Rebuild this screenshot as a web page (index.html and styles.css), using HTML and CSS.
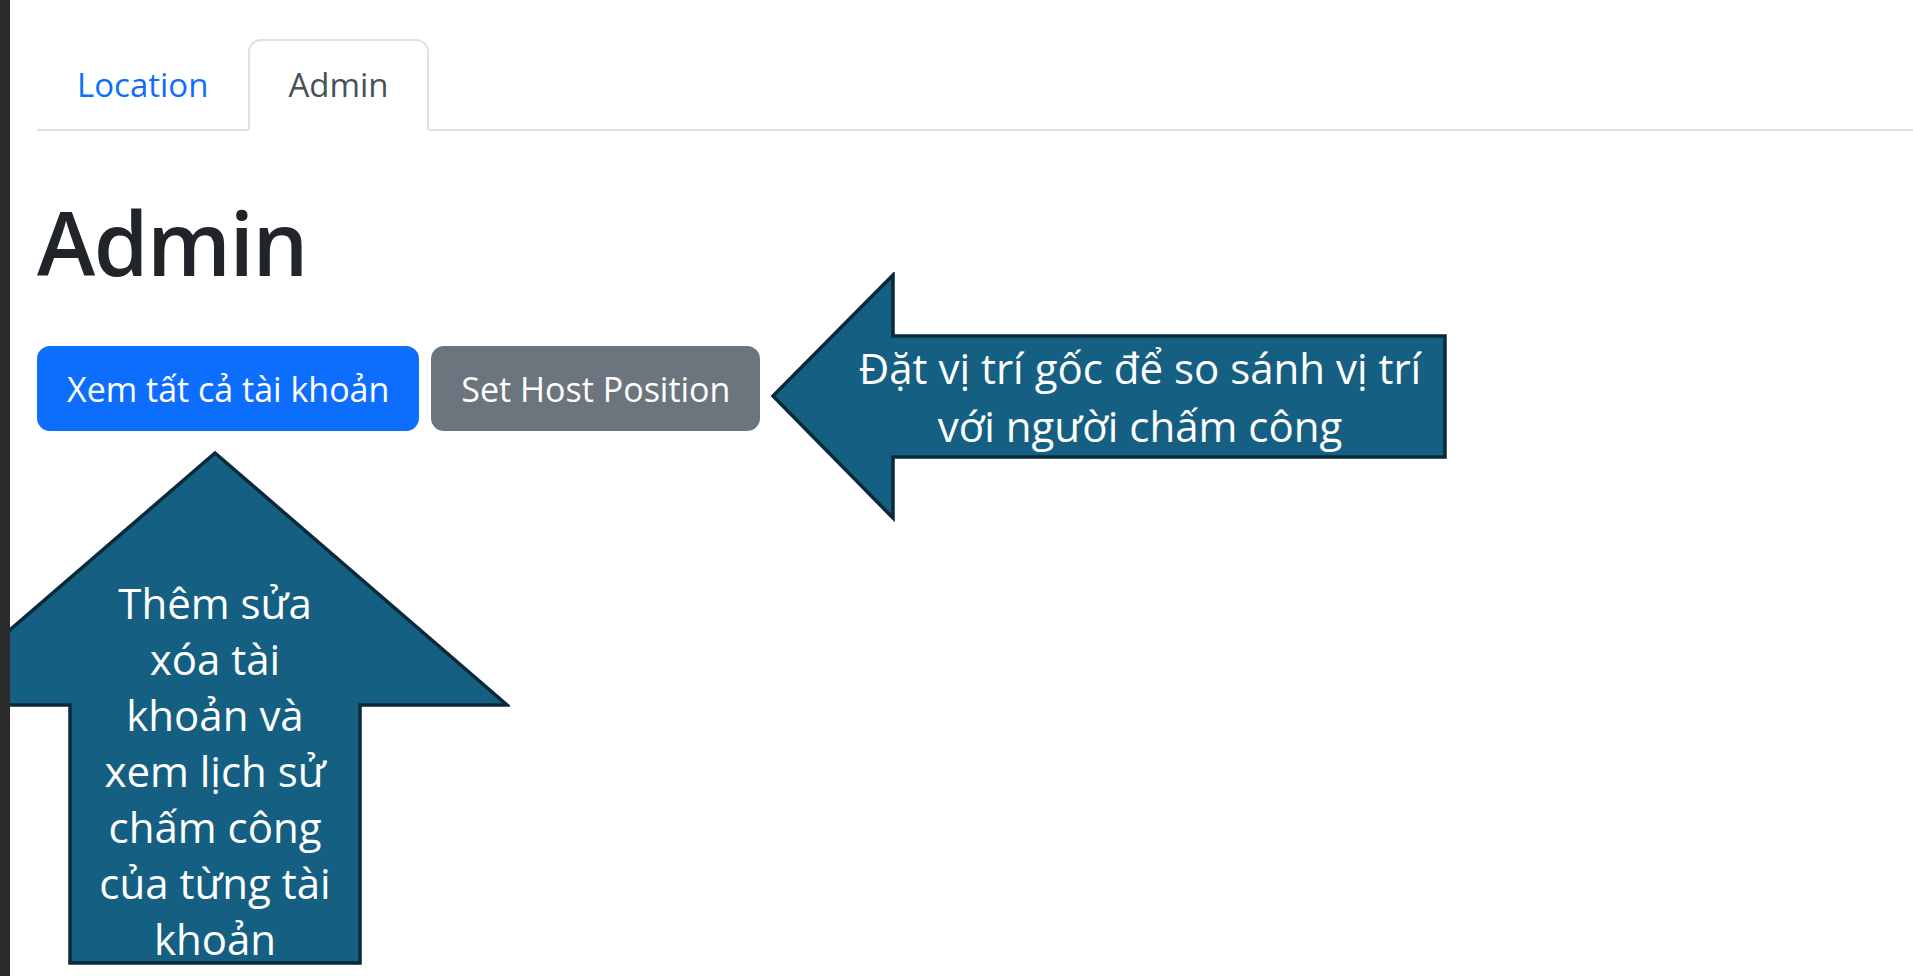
FILE: index.html
```html
<!DOCTYPE html>
<html lang="vi">
<head>
<meta charset="utf-8">
<title>Admin</title>
<link rel="stylesheet" href="styles.css">
</head>
<body>
<div class="app">
  <div class="edge"></div>
  <main class="page">
    <ul class="tabs">
      <li><a class="tab" href="#">Location</a></li>
      <li><a class="tab active" href="#">Admin</a></li>
    </ul>
    <h1 class="title">Admin</h1>
    <div class="actions">
      <button class="btn btn-primary">Xem tất cả tài khoản</button>
      <button class="btn btn-secondary">Set Host Position</button>
    </div>

    <div class="callout callout-left">
      <svg class="shape" width="680" height="250" viewBox="0 0 680 250">
        <polygon points="3,124 123,3 123,64 675,64 675,185 123,185 123,246"/>
      </svg>
      <p class="callout-text">Đặt vị trí gốc để so sánh vị trí<br>với người chấm công</p>
    </div>

    <div class="callout callout-up">
      <svg class="shape" width="590" height="520" viewBox="0 0 590 520">
        <polygon points="295,3 587,255 440,255 440,513 150,513 150,255 3,255"/>
      </svg>
      <p class="callout-text">Thêm sửa<br>xóa tài<br>khoản và<br>xem lịch sử<br>chấm công<br>của từng tài<br>khoản</p>
    </div>
  </main>
</div>
</body>
</html>
```

FILE: styles.css
```css
html, body {
  margin: 0;
  padding: 0;
  background: #fff;
}

body {
  font-family: "Open Sans", "Noto Sans", sans-serif;
  color: #212529;
}

.app {
  display: flex;
  height: 976px;
  overflow: hidden;
}

.edge {
  flex: none;
  width: 10px;
  background: #2b2b2b;
}

.page {
  flex: 1;
  position: relative;
  overflow: hidden;
  padding-left: 27px;
}

.tabs {
  list-style: none;
  margin: 39px 0 0;
  padding: 0;
  display: flex;
  border-bottom: 2px solid #dee2e6;
}

.tab {
  display: block;
  font-size: 33px;
  line-height: 54px;
  padding: 17px 38px 17px 38px;
  border: 2px solid transparent;
  border-radius: 13px 13px 0 0;
  margin-bottom: -2px;
  color: #0d6efd;
  text-decoration: none;
}

.tab.active {
  color: #495057;
  background: #fff;
  border-color: #dee2e6 #dee2e6 #fff;
}

.title {
  margin: 57px 0 50px;
  font-size: 88px;
  line-height: 108px;
  font-weight: 600;
  letter-spacing: -1.5px;
  color: #212529;
}

.actions {
  display: flex;
  gap: 12px;
}

.btn {
  font-family: inherit;
  font-size: 34px;
  line-height: 54px;
  padding: 13.5px 28px;
  border: 2px solid transparent;
  border-radius: 13px;
  color: #fff;
  cursor: pointer;
}

.btn-primary {
  background: #0d6efd;
  border-color: #0d6efd;
}

.btn-secondary {
  background: #6c757d;
  border-color: #6c757d;
}

/* annotation arrows laid over the page */
.callout {
  position: absolute;
  display: flex;
  justify-content: center;
  box-sizing: border-box;
}

.shape {
  position: absolute;
  left: 0;
  top: 0;
}

.shape polygon {
  fill: #156082;
  stroke: #0a2a3b;
  stroke-width: 3.5;
  stroke-linejoin: miter;
}

.callout-text {
  position: relative;
  margin: 0;
  color: #fff;
  font-size: 42px;
  text-align: center;
  white-space: nowrap;
}

.callout-left {
  left: 760px;
  top: 272px;
  width: 680px;
  height: 250px;
  align-items: center;
  padding-left: 60px;
}

.callout-left .callout-text {
  line-height: 58px;
}

.callout-up {
  left: -90px;
  top: 450px;
  width: 590px;
  height: 520px;
  align-items: flex-start;
  padding-top: 125px;
}

.callout-up .callout-text {
  line-height: 56px;
}
```
